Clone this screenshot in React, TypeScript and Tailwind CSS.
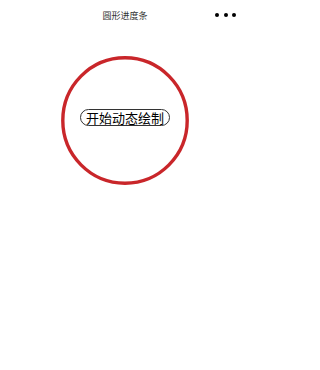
import React from "react";

export default function App() {
  return (
    <div className="w-[250px] h-[370px] bg-white overflow-hidden" style={{ fontFamily: '"Noto Sans CJK SC", "Noto Sans", sans-serif' }}>
      <div className="relative h-[30px] flex items-center justify-center">
        <span className="text-[9px] leading-none text-[#333] mt-[1px]">圆形进度条</span>
        <div className="absolute right-[14px] top-[13px] flex gap-[4.5px]">
          <div className="w-[4px] h-[4px] rounded-full bg-black" />
          <div className="w-[4px] h-[4px] rounded-full bg-black" />
          <div className="w-[4px] h-[4px] rounded-full bg-black" />
        </div>
      </div>
      <div className="flex justify-center pt-[26px] pl-[-1px]">
        <div className="grid place-items-center w-[128px] h-[129px] ml-[-1px]">
          <svg className="[grid-area:1/1]" width="128" height="129" viewBox="0 0 128 129">
            <ellipse cx="64" cy="64.5" rx="62.2" ry="62.7" fill="none" stroke="#c9262a" strokeWidth="3.4" />
          </svg>
          <button className="[grid-area:1/1] mb-[7px] ml-[1px] h-[17px] px-[5px] rounded-full border border-[#333] bg-white text-[13px] leading-none text-black flex items-center">
            开始动态绘制
          </button>
        </div>
      </div>
    </div>
  );
}
